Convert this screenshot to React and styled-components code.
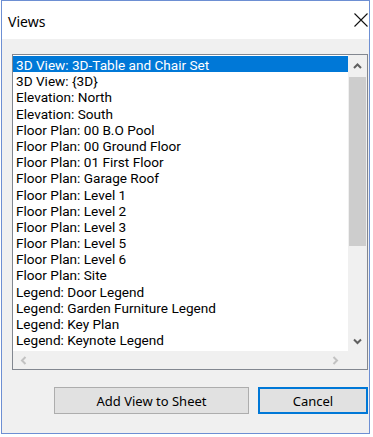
import React from "react";
import styled, { createGlobalStyle } from "styled-components";

const Global = createGlobalStyle`
  html, body { margin: 0; padding: 0; background: #ffffff; }
  body { font-family: "Noto Sans", "Open Sans", sans-serif; }
  * { box-sizing: border-box; }
`;

const Window = styled.div`
  margin-left: 1px;
  width: 369px;
  height: 434px;
  border: 1px solid #6d8fd3;
  background: #f0f0f0;
  display: flex;
  flex-direction: column;
`;

const TitleBar = styled.div`
  height: 38px;
  background: #ffffff;
  display: flex;
  align-items: center;
  justify-content: space-between;
  padding: 0 0 0 6px;
  flex-shrink: 0;
`;

const Title = styled.span`
  font-size: 14px;
  color: #000;
  margin-top: 3px;
`;

const CloseBtn = styled.div`
  width: 28px;
  height: 38px;
  display: flex;
  align-items: center;
  justify-content: flex-start;
  padding-left: 13px;
`;

const Body = styled.div`
  flex: 1;
  display: flex;
  flex-direction: column;
  padding: 15px 0 0 10px;
`;

const ListBox = styled.div`
  width: 356px;
  height: 316px;
  border: 1px solid #828790;
  background: #ffffff;
  display: grid;
  grid-template-columns: 1fr 19px;
  grid-template-rows: 1fr 18px;
`;

const Items = styled.div`
  overflow: hidden;
  padding-top: 1px;
`;

const Item = styled.div`
  height: 16.2px;
  padding-top: 3px;
  line-height: 13.2px;
  font-family: Roboto, "Noto Sans", sans-serif;
  font-size: 13.6px;
  padding-left: 3px;
  white-space: nowrap;
  color: ${(p) => (p.$selected ? "#ffffff" : "#000000")};
  background: ${(p) => (p.$selected ? "#0078d7" : "transparent")};
`;

const VScroll = styled.div`
  background: #f0f0f0;
  display: flex;
  flex-direction: column;
`;

const ArrowBtn = styled.div`
  height: ${(p) => p.$h || 22}px;
  display: flex;
  align-items: center;
  justify-content: center;
  flex-shrink: 0;
`;

const Thumb = styled.div`
  height: 169px;
  margin: 0 1px;
  background: #cdcdcd;
  flex-shrink: 0;
`;

const Track = styled.div`
  flex: 1;
`;

const HScroll = styled.div`
  background: #f0f0f0;
  display: flex;
  align-items: center;
  justify-content: space-between;
  padding: 0 8px 0 7px;
`;

const Corner = styled.div`
  background: #f0f0f0;
`;

const Buttons = styled.div`
  display: flex;
  justify-content: flex-end;
  gap: 9px;
  margin-top: 17px;
  padding-right: 1px;
`;

const Button = styled.button`
  height: 27px;
  width: ${(p) => p.$w}px;
  background: #e1e1e1;
  border: ${(p) => (p.$default ? "2px solid #0078d7" : "1px solid #adadad")};
  font-family: "Noto Sans", "Open Sans", sans-serif;
  font-size: 13px;
  color: #000;
  padding: 0;
  display: flex;
  align-items: center;
  justify-content: center;
`;

const Chevron = ({ dir, color }) => {
  const paths = {
    up: "M1 6 L4.5 2.5 L8 6",
    down: "M1 2.5 L4.5 6 L8 2.5",
    left: "M5.5 1 L2 4.5 L5.5 8",
    right: "M2.5 1 L6 4.5 L2.5 8",
  };
  return (
    <svg width="9" height="9" viewBox="0 0 9 9">
      <path d={paths[dir]} fill="none" stroke={color} strokeWidth="2" />
    </svg>
  );
};

const items = [
  "3D View: 3D-Table and Chair Set",
  "3D View: {3D}",
  "Elevation: North",
  "Elevation: South",
  "Floor Plan: 00 B.O Pool",
  "Floor Plan: 00 Ground Floor",
  "Floor Plan: 01 First Floor",
  "Floor Plan: Garage Roof",
  "Floor Plan: Level 1",
  "Floor Plan: Level 2",
  "Floor Plan: Level 3",
  "Floor Plan: Level 5",
  "Floor Plan: Level 6",
  "Floor Plan: Site",
  "Legend: Door Legend",
  "Legend: Garden Furniture Legend",
  "Legend: Key Plan",
  "Legend: Keynote Legend",
];

export default function App() {
  return (
    <>
      <Global />
      <Window>
        <TitleBar>
          <Title>Views</Title>
          <CloseBtn>
            <svg width="14" height="14" viewBox="0 0 14 14">
              <path d="M0.5 0.5 L13.5 13.5 M13.5 0.5 L0.5 13.5" stroke="#111" strokeWidth="1.1" />
            </svg>
          </CloseBtn>
        </TitleBar>
        <Body>
          <ListBox>
            <Items>
              {items.map((t, i) => (
                <Item key={t} $selected={i === 0}>
                  {t}
                </Item>
              ))}
            </Items>
            <VScroll>
              <ArrowBtn $h={22}>
                <Chevron dir="up" color="#606060" />
              </ArrowBtn>
              <Thumb />
              <Track />
              <ArrowBtn $h={20}>
                <Chevron dir="down" color="#606060" />
              </ArrowBtn>
            </VScroll>
            <HScroll>
              <Chevron dir="left" color="#c2c2c2" />
              <Chevron dir="right" color="#c2c2c2" />
            </HScroll>
            <Corner />
          </ListBox>
          <Buttons>
            <Button $w={195}>Add View to Sheet</Button>
            <Button $w={110} $default>
              Cancel
            </Button>
          </Buttons>
        </Body>
      </Window>
    </>
  );
}
